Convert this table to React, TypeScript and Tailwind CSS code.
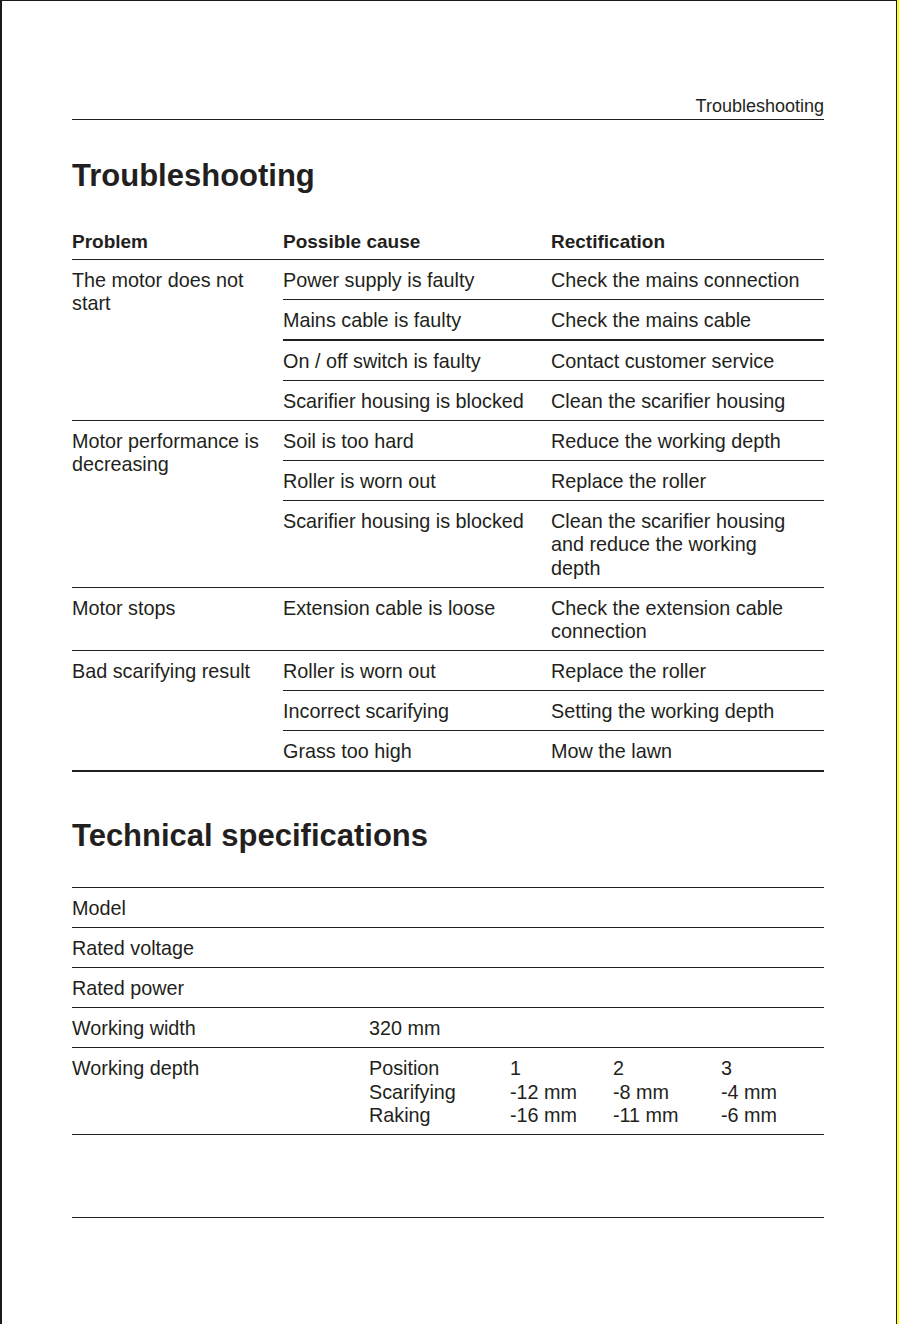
import React from 'react';

type Cause = { cause: string; fix: string[] };
type Group = { problem: string[]; rows: Cause[] };

const TROUBLE: Group[] = [
  {
    problem: ['The motor does not', 'start'],
    rows: [
      { cause: 'Power supply is faulty', fix: ['Check the mains connection'] },
      { cause: 'Mains cable is faulty', fix: ['Check the mains cable'] },
      { cause: 'On / off switch is faulty', fix: ['Contact customer service'] },
      { cause: 'Scarifier housing is blocked', fix: ['Clean the scarifier housing'] },
    ],
  },
  {
    problem: ['Motor performance is', 'decreasing'],
    rows: [
      { cause: 'Soil is too hard', fix: ['Reduce the working depth'] },
      { cause: 'Roller is worn out', fix: ['Replace the roller'] },
      {
        cause: 'Scarifier housing is blocked',
        fix: ['Clean the scarifier housing', 'and reduce the working', 'depth'],
      },
    ],
  },
  {
    problem: ['Motor stops'],
    rows: [{ cause: 'Extension cable is loose', fix: ['Check the extension cable', 'connection'] }],
  },
  {
    problem: ['Bad scarifying result'],
    rows: [
      { cause: 'Roller is worn out', fix: ['Replace the roller'] },
      { cause: 'Incorrect scarifying', fix: ['Setting the working depth'] },
      { cause: 'Grass too high', fix: ['Mow the lawn'] },
    ],
  },
];

const SPECS = ['Model', 'Rated voltage', 'Rated power'];

function Lines({ lines }: { lines: string[] }) {
  return (
    <>
      {lines.map((l, i) => (
        <div key={i}>{l}</div>
      ))}
    </>
  );
}

export default function App() {
  return (
    <div
      className="flex w-[899px] h-[1324px] bg-white text-[#231f20] overflow-hidden"
      style={{ fontFamily: '"Liberation Sans", Arial, sans-serif' }}
    >
      <div className="flex-1 border-l-2 border-t border-r border-[#1a1a1a] pl-[70px] pr-[72px] pt-[94px]">
        {/* running header */}
        <div className="text-right text-[18px] leading-[22px]">Troubleshooting</div>
        <div className="mt-[2px] border-t border-[#231f20]" />

        <h1 className="mt-[40px] text-[31px] leading-[31px] font-bold">Troubleshooting</h1>

        {/* troubleshooting table */}
        <div className="mt-[39px] text-[19.8px] leading-[23.5px]">
          <div className="flex border-b border-[#231f20] pb-[5px] text-[19px] font-bold">
            <div className="w-[211px]">Problem</div>
            <div className="w-[268px]">Possible cause</div>
            <div className="flex-1">Rectification</div>
          </div>

          {TROUBLE.map((g, gi) => (
            <div
              key={gi}
              className={
                gi === TROUBLE.length - 1
                  ? 'flex border-b-2 border-[#231f20]'
                  : 'flex border-b border-[#231f20]'
              }
            >
              <div className="w-[211px] pt-[9px]">
                <Lines lines={g.problem} />
              </div>
              <div className="flex-1">
                {g.rows.map((r, ri) => {
                  const last = ri === g.rows.length - 1;
                  const thick = gi === 0 && ri === 1;
                  return (
                    <div
                      key={ri}
                      className={
                        last
                          ? 'flex pt-[9px] pb-[6.5px]'
                          : thick
                            ? 'flex pt-[9px] pb-[6.5px] border-b-2 border-[#231f20]'
                            : 'flex pt-[9px] pb-[6.5px] border-b border-[#231f20]'
                      }
                    >
                      <div className="w-[268px]">{r.cause}</div>
                      <div className="flex-1">
                        <Lines lines={r.fix} />
                      </div>
                    </div>
                  );
                })}
              </div>
            </div>
          ))}
        </div>

        <h1 className="mt-[48px] text-[31px] leading-[31px] font-bold">Technical specifications</h1>

        {/* specs table */}
        <div className="mt-[36px] border-t border-[#231f20] text-[19.8px] leading-[23.5px]">
          {SPECS.map((s) => (
            <div key={s} className="flex border-b border-[#231f20] pt-[9px] pb-[6.5px]">
              <div className="w-[297px]">{s}</div>
              <div className="flex-1">&nbsp;</div>
            </div>
          ))}
          <div className="flex border-b border-[#231f20] pt-[9px] pb-[6.5px]">
            <div className="w-[297px]">Working width</div>
            <div className="flex-1">320 mm</div>
          </div>
          <div className="flex border-b border-[#231f20] pt-[9px] pb-[6px]">
            <div className="w-[297px]">Working depth</div>
            <div className="flex-1 grid grid-cols-[141px_103px_108px_1fr]">
              <div>Position</div>
              <div>1</div>
              <div>2</div>
              <div>3</div>
              <div>Scarifying</div>
              <div>-12 mm</div>
              <div>-8 mm</div>
              <div>-4 mm</div>
              <div>Raking</div>
              <div>-16 mm</div>
              <div>-11 mm</div>
              <div>-6 mm</div>
            </div>
          </div>
        </div>

        {/* footer rule */}
        <div className="mt-[82px] border-t-[1.5px] border-[#231f20]" />
      </div>
      <div className="w-[2px] bg-[#ffff00]" />
    </div>
  );
}
